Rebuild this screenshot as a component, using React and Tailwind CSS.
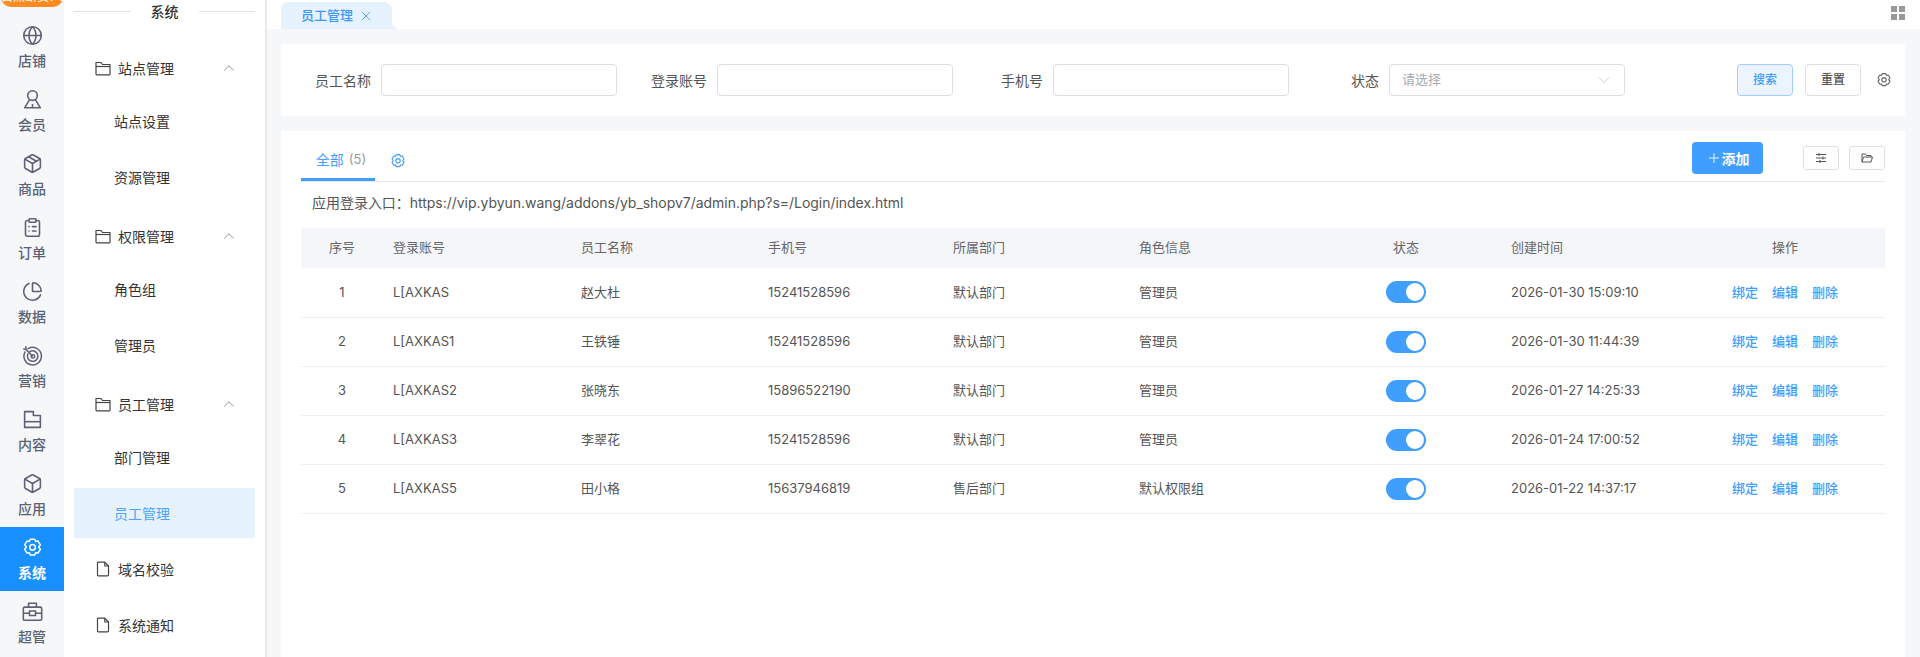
import { ChevronUp, ChevronDown, X, Plus, Globe, Package, ClipboardList, ChartPie, Box } from 'lucide-react';

const GearIcon = ({ className }) => (
  <svg className={className} viewBox="0 0 24 24" fill="none" stroke="currentColor" strokeWidth="1.7" strokeLinejoin="round">
    <path d="M9.400 2.500h5.200l1 2.600 2.700-.5 2.700 4.400-1.800 2.100v.8l1.800 2.100-2.700 4.400-2.700-.5-1 2.600H9.400l-1-2.600-2.700.5L3 14l1.800-2.100v-.8L3 9l2.700-4.400 2.700.5z" />
    <circle cx="12" cy="11.800" r="3.300" />
  </svg>
);

const UserTieIcon = ({ className }) => (
  <svg className={className} viewBox="0 0 24 24" fill="none" stroke="currentColor" strokeWidth="1.8" strokeLinejoin="round">
    <circle cx="12" cy="7.500" r="5.500" />
    <path d="M8.500 12.500 3 21.500h18l-5.500-9" />
    <path d="M12 17v4.500" />
  </svg>
);

const TargetIcon = ({ className }) => (
  <svg className={className} viewBox="0 0 24 24" fill="none" stroke="currentColor" strokeWidth="1.7" strokeLinecap="round">
    <path d="M7 4.200A10 10 0 1 1 3.400 8" />
    <path d="M9 7.600A6 6 0 1 1 6.800 10" />
    <circle cx="12.500" cy="13" r="2" />
    <path d="M12 12.500 4.500 5M2 4.500h2.500V2" />
  </svg>
);

const FolderBoxIcon = ({ className }) => (
  <svg className={className} viewBox="0 0 24 24" fill="none" stroke="currentColor" strokeWidth="1.800" strokeLinejoin="round">
    <path d="M3 3h10v4.500h8V21H3z" />
    <path d="M3 14.500h18" />
  </svg>
);

const CaseIcon = ({ className }) => (
  <svg className={className} viewBox="0 0 24 24" fill="none" stroke="currentColor" strokeWidth="1.800" strokeLinejoin="round">
    <rect x="1.500" y="7" width="21" height="15" rx="1.500" />
    <path d="M7.500 7V2.500h9V7M1.500 14h7M15.500 14h7" />
    <rect x="8.500" y="11.500" width="7" height="5" />
  </svg>
);

const MenuFolderIcon = ({ className }) => (
  <svg className={className} viewBox="0 0 16 16" fill="none" stroke="currentColor" strokeWidth="1.200" strokeLinejoin="round">
    <path d="M1 2.500h5L7.500 4.500H15V14a.8.8 0 0 1-.8.8H1.800A.8.8 0 0 1 1 14z" />
    <path d="M1 6.500h14" />
  </svg>
);

const MenuFileIcon = ({ className }) => (
  <svg className={className} viewBox="0 0 16 16" fill="none" stroke="currentColor" strokeWidth="1.200" strokeLinejoin="round">
    <path d="M2.500 2a.8.8 0 0 1 .8-.8h6.500L13.500 5v9a.8.8 0 0 1-.8.8H3.300a.8.8 0 0 1-.8-.8z" />
    <path d="M9.800 1.200V5h3.700" />
  </svg>
);

const SlidersIcon = ({ className }) => (
  <svg className={className} viewBox="0 0 12 12" fill="none" stroke="currentColor" strokeWidth="1">
    <path d="M1 2.500h10M1 6h10M1 9.500h10" />
    <path d="M4 1v3M8 4.500v3M5 8v3" />
  </svg>
);

const SmallFolderIcon = ({ className }) => (
  <svg className={className} viewBox="0 0 12 12" fill="none" stroke="currentColor" strokeWidth="1" strokeLinejoin="round">
    <path d="M1 10V2h3.500L5.500 3.500H10V5" />
    <path d="M1 10 2.500 5H11.500L10 10z" />
  </svg>
);

const railItems = [
  { label: '店铺', icon: Globe },
  { label: '会员', icon: UserTieIcon },
  { label: '商品', icon: Package },
  { label: '订单', icon: ClipboardList },
  { label: '数据', icon: ChartPie },
  { label: '营销', icon: TargetIcon },
  { label: '内容', icon: FolderBoxIcon },
  { label: '应用', icon: Box },
  { label: '系统', icon: GearIcon, active: true },
  { label: '超管', icon: CaseIcon },
];

const menuGroups = [
  { title: '站点管理', children: ['站点设置', '资源管理'] },
  { title: '权限管理', children: ['角色组', '管理员'] },
  { title: '员工管理', children: ['部门管理', '员工管理'] },
];

const employees = [
  { id: 1, account: 'L[AXKAS', name: '赵大杜', phone: '15241528596', dept: '默认部门', role: '管理员', time: '2026-01-30 15:09:10' },
  { id: 2, account: 'L[AXKAS1', name: '王铁锤', phone: '15241528596', dept: '默认部门', role: '管理员', time: '2026-01-30 11:44:39' },
  { id: 3, account: 'L[AXKAS2', name: '张晓东', phone: '15896522190', dept: '默认部门', role: '管理员', time: '2026-01-27 14:25:33' },
  { id: 4, account: 'L[AXKAS3', name: '李翠花', phone: '15241528596', dept: '默认部门', role: '管理员', time: '2026-01-24 17:00:52' },
  { id: 5, account: 'L[AXKAS5', name: '田小格', phone: '15637946819', dept: '售后部门', role: '默认权限组', time: '2026-01-22 14:37:17' },
];

function Rail() {
  return (
    <div className="relative w-16 shrink-0 bg-[#f6f7f9] pt-[15px]">
      <div className="absolute left-[1px] top-[-13px] h-[20px] w-[62px] overflow-hidden whitespace-nowrap rounded-b-[10px] bg-[#ff8a1f] text-center text-[12px] leading-[20px] text-white">
        自然断货?:0
      </div>
      {railItems.map(item => {
        const Icon = item.icon;
        return (
          <div
            key={item.label}
            className={`flex h-[64px] flex-col items-center justify-center pt-[2px] ${item.active ? 'bg-[#1890ff] font-bold text-white' : 'text-[#5b6275]'}`}
          >
            <Icon className="h-[21px] w-[21px]" strokeWidth={1.8} />
            <span className={`mt-[5px] text-[14px] leading-[20px] ${item.active ? '' : 'font-medium'}`}>{item.label}</span>
          </div>
        );
      })}
    </div>
  );
}

function Menu() {
  return (
    <div className="w-[201px] shrink-0 bg-white px-[10px]">
      <div className="flex h-[23px] items-center">
        <div className="h-px flex-1 bg-[#dfe1e8]"></div>
        <span className="w-[68px] text-center text-[14px] font-medium text-[#333]">系统</span>
        <div className="h-px flex-1 bg-[#dfe1e8]"></div>
      </div>
      <div className="mt-[20px] text-[14px] text-[#333]">
        {menuGroups.map(group => (
          <div key={group.title} className="pb-[3px]">
            <div className="mb-[3px] flex h-[50px] items-center pl-[21px] pr-[17px]">
              <MenuFolderIcon className="h-[16px] w-[16px] text-[#444]" />
              <span className="ml-[7px] flex-1">{group.title}</span>
              <ChevronUp className="h-[18px] w-[18px] text-[#777]" strokeWidth={1} />
            </div>
            {group.children.map(child => {
              const active = group.title === '员工管理' && child === '员工管理';
              return (
                <div
                  key={child}
                  className={`mb-[6px] flex h-[50px] items-center pl-[40px] ${active ? 'bg-[#e6f3ff] text-[#4ba3f7]' : ''}`}
                >
                  {child}
                </div>
              );
            })}
          </div>
        ))}
        <div className="mt-[-3px]">
          {['域名校验', '系统通知'].map(title => (
            <div key={title} className="mb-[6px] flex h-[50px] items-center pl-[21px]">
              <MenuFileIcon className="h-[16px] w-[16px] text-[#444]" />
              <span className="ml-[7px]">{title}</span>
            </div>
          ))}
        </div>
      </div>
    </div>
  );
}

function Field({ label, placeholder, select }) {
  return (
    <div className="flex items-center">
      <span className="w-[90px] shrink-0 text-right text-[14px] text-[#555]">{label}</span>
      <div className="ml-[10px] flex h-[32px] w-[236px] items-center justify-between rounded-[4px] border border-[#dcdfe6] bg-white pl-[12px] pr-[10px] text-[13px] text-[#a8abb2]">
        <span>{placeholder}</span>
        {select && <ChevronDown className="h-[20px] w-[20px] text-[#c0c4cc]" strokeWidth={1} />}
      </div>
    </div>
  );
}

function Switch() {
  return (
    <div className="mx-auto flex h-[22px] w-[40px] items-center justify-end rounded-full bg-[#409eff] pr-[2px]">
      <div className="h-[18px] w-[18px] rounded-full bg-white"></div>
    </div>
  );
}

export default function App() {
  return (
    <div
      className="flex h-[657px] overflow-hidden bg-white"
      style={{ fontFamily: 'Inter, "Noto Sans CJK SC", sans-serif' }}
    >
      <Rail />
      <Menu />
      <div className="flex min-w-0 flex-1 flex-col border-l-2 border-[#e8e9ee]">
        {/* tabs */}
        <div className="flex h-[29px] shrink-0 items-end justify-between bg-white pl-[14px]">
          <div className="relative flex h-[27px] w-[111px] items-center rounded-t-[8px] bg-[#e6f3ff] pl-[20px] text-[13px] font-medium text-[#3b97f5]">
            员工管理
            <X className="ml-[5px] h-[16px] w-[16px]" strokeWidth={1.2} />
            <svg className="absolute bottom-0 left-full h-[8px] w-[8px]" viewBox="0 0 8 8">
              <path d="M0 0C0 5 3 8 8 8H0z" fill="#e6f3ff" />
            </svg>
          </div>
          <div className="mb-[9px] mr-[15px] grid grid-cols-2 gap-[2px]">
            <div className="h-[6px] w-[6px] bg-[#999]"></div>
            <div className="h-[6px] w-[6px] bg-[#999]"></div>
            <div className="h-[6px] w-[6px] bg-[#999]"></div>
            <div className="h-[6px] w-[6px] bg-[#999]"></div>
          </div>
        </div>

        <div className="flex flex-1 flex-col gap-[15px] bg-[#f6f7f9] pl-[14px] pr-[15px] pt-[15px]">
          {/* filters */}
          <div className="flex h-[72px] items-center bg-white">
            <Field label="员工名称" />
            <Field label="登录账号" />
            <Field label="手机号" />
            <Field label="状态" placeholder="请选择" select />
            <button className="ml-[112px] h-[32px] w-[56px] rounded-[4px] border border-[#a0cfff] bg-[#ecf5ff] text-[12px] font-medium text-[#409eff]">搜索</button>
            <button className="ml-[12px] h-[32px] w-[56px] rounded-[4px] border border-[#dcdfe6] bg-white text-[12px] font-medium text-[#555]">重置</button>
            <GearIcon className="ml-[15px] h-[16px] w-[16px] text-[#666]" />
          </div>

          {/* list */}
          <div className="flex-1 bg-white px-[20px]">
            <div className="flex h-[51px] items-stretch justify-between border-b border-[#e8e9ee]">
              <div className="flex items-stretch">
                <div className="flex w-[74px] items-center justify-center border-b-[3px] border-[#409eff] pl-[6px] pt-[10px] text-[14px] text-[#409eff]">
                  全部
                  <span className="ml-[5px] text-[13px] text-[#999]">(5)</span>
                </div>
                <div className="ml-[15px] flex items-center pt-[10px]">
                  <GearIcon className="h-[16px] w-[16px] text-[#409eff]" />
                </div>
              </div>
              <div className="flex items-start pt-[11px]">
                <button className="flex h-[32px] w-[71px] items-center justify-center rounded-[4px] bg-[#409eff] text-[14px] font-bold text-white">
                  <Plus className="h-[16px] w-[16px]" strokeWidth={1.3} />
                  添加
                </button>
                <button className="ml-[40px] mt-[4px] flex h-[24px] w-[36px] items-center justify-center rounded-[3px] border border-[#dcdfe6]">
                  <SlidersIcon className="h-[12px] w-[12px] text-[#555]" />
                </button>
                <button className="ml-[10px] mt-[4px] flex h-[24px] w-[36px] items-center justify-center rounded-[3px] border border-[#dcdfe6]">
                  <SmallFolderIcon className="h-[12px] w-[12px] text-[#555]" />
                </button>
              </div>
            </div>

            <div className="flex h-[46px] items-center pb-[5px] pl-[11px] text-[14px] tracking-[-0.03px] text-[#555]">
              应用登录入口：https://vip.ybyun.wang/addons/yb_shopv7/admin.php?s=/Login/index.html
            </div>

            <table className="w-[1584px] table-fixed text-[13px] text-[#555]">
              <colgroup>
                <col className="w-[82px]" />
                <col className="w-[188px]" />
                <col className="w-[187px]" />
                <col className="w-[185px]" />
                <col className="w-[186px]" />
                <col className="w-[182px]" />
                <col className="w-[190px]" />
                <col className="w-[182px]" />
                <col className="w-[202px]" />
              </colgroup>
              <thead>
                <tr className="h-[40px] bg-[#f5f6fa] text-[#666]">
                  <th className="text-center font-normal">序号</th>
                  <th className="pl-[10px] text-left font-normal">登录账号</th>
                  <th className="pl-[10px] text-left font-normal">员工名称</th>
                  <th className="pl-[10px] text-left font-normal">手机号</th>
                  <th className="pl-[10px] text-left font-normal">所属部门</th>
                  <th className="pl-[10px] text-left font-normal">角色信息</th>
                  <th className="text-center font-normal">状态</th>
                  <th className="pl-[10px] text-left font-normal">创建时间</th>
                  <th className="pl-[2px] text-center font-normal">操作</th>
                </tr>
              </thead>
              <tbody>
                {employees.map(row => (
                  <tr key={row.id} className="h-[49px] border-b border-[#ebeef5]">
                    <td className="text-center">{row.id}</td>
                    <td className="pl-[10px]">{row.account}</td>
                    <td className="pl-[10px]">{row.name}</td>
                    <td className="pl-[10px]">{row.phone}</td>
                    <td className="pl-[10px]">{row.dept}</td>
                    <td className="pl-[10px]">{row.role}</td>
                    <td><Switch /></td>
                    <td className="pl-[10px]">{row.time}</td>
                    <td>
                      <div className="flex justify-center gap-[14px] pl-[2px] font-medium text-[#409eff]">
                        <span>绑定</span>
                        <span>编辑</span>
                        <span>删除</span>
                      </div>
                    </td>
                  </tr>
                ))}
              </tbody>
            </table>
          </div>
        </div>
      </div>
    </div>
  );
}
